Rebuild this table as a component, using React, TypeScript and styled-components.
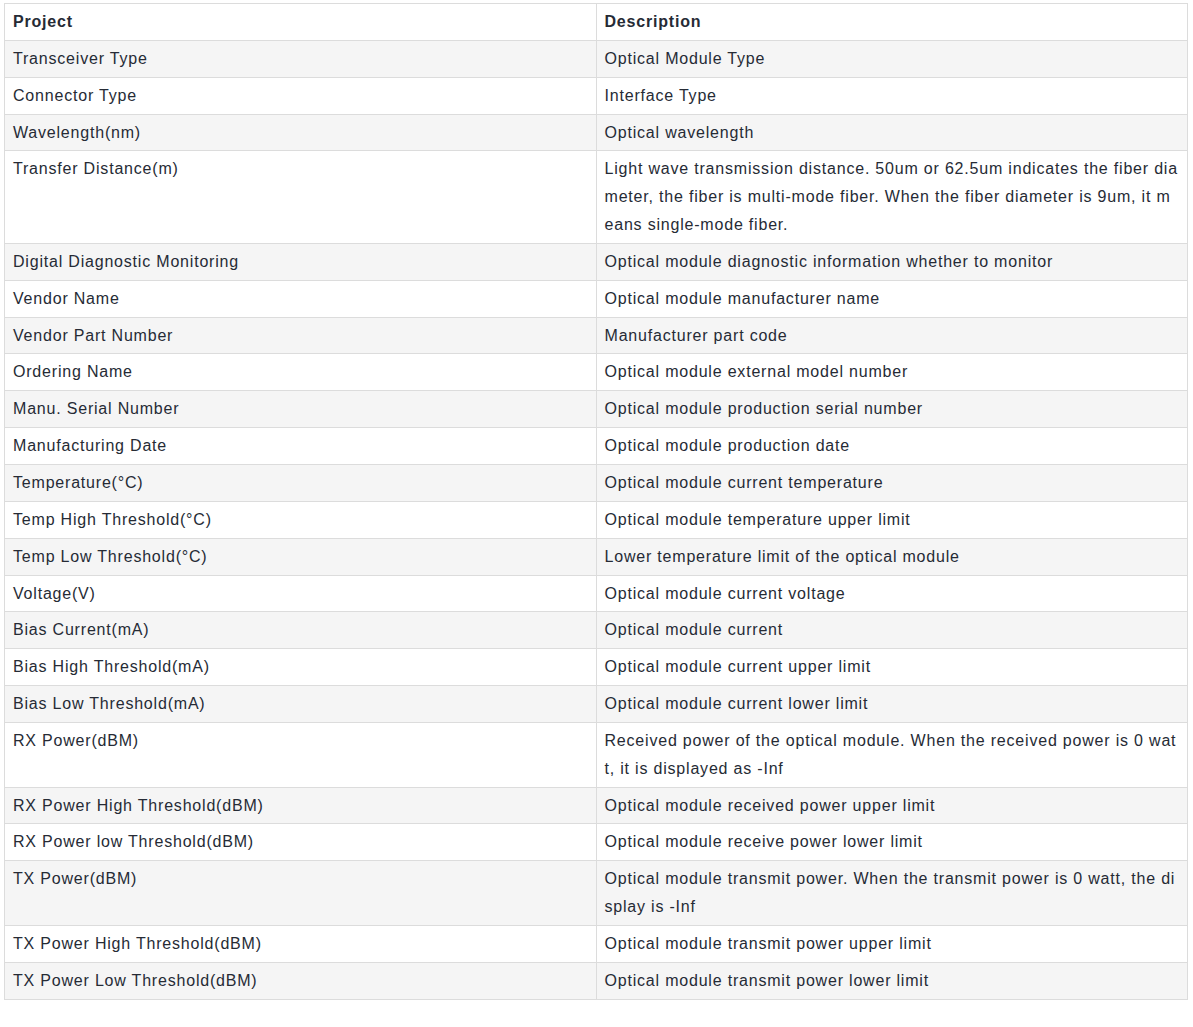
import React from "react";
import styled, { createGlobalStyle } from "styled-components";

const Global = createGlobalStyle`
  html, body { margin: 0; padding: 0; background: #fff; }
  body { font-family: "Liberation Sans", Arial, sans-serif; }
`;

const Page = styled.div`
  padding: 3px 0 0 4px;
`;

const Table = styled.table`
  width: 1184px;
  border-collapse: collapse;
  table-layout: fixed;
  font-size: 16px;
  letter-spacing: 0.8px;
  color: #262b35;
`;

const Row = styled.tr<{ $shade: boolean }>`
  background: ${(p) => (p.$shade ? "#f5f5f5" : "#ffffff")};
`;

const Cell = styled.td`
  border: 1px solid #dcdcdc;
  padding: 4px 8px;
  line-height: 27.85px;
  vertical-align: top;
  word-break: break-all;
  text-align: left;
`;

const HeadCell = styled.th`
  border: 1px solid #dcdcdc;
  padding: 4px 8px;
  line-height: 27.85px;
  font-weight: 700;
  text-align: left;
  vertical-align: top;
`;

const rows: [string, string][] = [
  ["Transceiver Type", "Optical Module Type"],
  ["Connector Type", "Interface Type"],
  ["Wavelength(nm)", "Optical wavelength"],
  [
    "Transfer Distance(m)",
    "Light wave transmission distance. 50um or 62.5um indicates the fiber diameter, the fiber is multi-mode fiber. When the fiber diameter is 9um, it means single-mode fiber.",
  ],
  ["Digital Diagnostic Monitoring", "Optical module diagnostic information whether to monitor"],
  ["Vendor Name", "Optical module manufacturer name"],
  ["Vendor Part Number", "Manufacturer part code"],
  ["Ordering Name", "Optical module external model number"],
  ["Manu. Serial Number", "Optical module production serial number"],
  ["Manufacturing Date", "Optical module production date"],
  ["Temperature(°C)", "Optical module current temperature"],
  ["Temp High Threshold(°C)", "Optical module temperature upper limit"],
  ["Temp Low Threshold(°C)", "Lower temperature limit of the optical module"],
  ["Voltage(V)", "Optical module current voltage"],
  ["Bias Current(mA)", "Optical module current"],
  ["Bias High Threshold(mA)", "Optical module current upper limit"],
  ["Bias Low Threshold(mA)", "Optical module current lower limit"],
  [
    "RX Power(dBM)",
    "Received power of the optical module. When the received power is 0 watt, it is displayed as -Inf",
  ],
  ["RX Power High Threshold(dBM)", "Optical module received power upper limit"],
  ["RX Power low Threshold(dBM)", "Optical module receive power lower limit"],
  [
    "TX Power(dBM)",
    "Optical module transmit power. When the transmit power is 0 watt, the display is -Inf",
  ],
  ["TX Power High Threshold(dBM)", "Optical module transmit power upper limit"],
  ["TX Power Low Threshold(dBM)", "Optical module transmit power lower limit"],
];

export default function App() {
  return (
    <>
      <Global />
      <Page>
        <Table>
          <thead>
            <Row $shade={false}>
              <HeadCell>Project</HeadCell>
              <HeadCell>Description</HeadCell>
            </Row>
          </thead>
          <tbody>
            {rows.map(([a, b], i) => (
              <Row key={a} $shade={i % 2 === 0}>
                <Cell>{a}</Cell>
                <Cell>{b}</Cell>
              </Row>
            ))}
          </tbody>
        </Table>
      </Page>
    </>
  );
}
